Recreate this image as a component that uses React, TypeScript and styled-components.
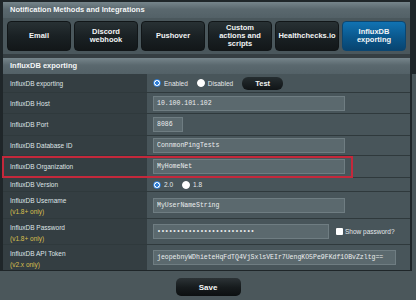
import React from "react";
import styled, { createGlobalStyle } from "styled-components";

const Global = createGlobalStyle`
  html, body {
    margin: 0;
    padding: 0;
    background: #4b575b;
    font-family: "Liberation Sans", Arial, sans-serif;
  }
`;

const tabs = [
  { id: "email", lines: ["Email"] },
  { id: "discord", lines: ["Discord", "webhook"] },
  { id: "pushover", lines: ["Pushover"] },
  { id: "custom", lines: ["Custom", "actions and", "scripts"] },
  { id: "hc", lines: ["Healthchecks.io"] },
  { id: "influx", lines: ["InfluxDB", "exporting"], active: true },
];

const App: React.FC = () => {
  return (
    <Page>
      <Global />
      <TopBlock>
        <SectionHeader>Notification Methods and Integrations</SectionHeader>
        <TabRow>
          {tabs.map((t) => (
            <Tab key={t.id} $active={!!t.active}>
              {t.lines.map((l) => (
                <span key={l}>{l}</span>
              ))}
            </Tab>
          ))}
        </TabRow>
        <SectionHeader>InfluxDB exporting</SectionHeader>
      </TopBlock>

      <Table>
        <Row $h={18}>
          <Label>InfluxDB exporting</Label>
          <Value>
            <Choice>
              <Radio $checked />
              Enabled
            </Choice>
            <Choice>
              <Radio />
              Disabled
            </Choice>
            <SmallButton>Test</SmallButton>
          </Value>
        </Row>
        <Row $h={21}>
          <Label>InfluxDB Host</Label>
          <Value>
            <TextInput $w={192} readOnly value="10.100.101.102" />
          </Value>
        </Row>
        <Row $h={22}>
          <Label>InfluxDB Port</Label>
          <Value>
            <TextInput $w={30} readOnly value="8086" />
          </Value>
        </Row>
        <Row $h={20}>
          <Label>InfluxDB Database ID</Label>
          <Value>
            <TextInput $w={192} readOnly value="ConnmonPingTests" />
          </Value>
        </Row>
        <Row $h={22}>
          <Highlight />
          <Label>InfluxDB Organization</Label>
          <Value>
            <TextInput $w={192} readOnly value="MyHomeNet" />
          </Value>
        </Row>
        <Row $h={14}>
          <Label>InfluxDB Version</Label>
          <Value>
            <Choice>
              <Radio $checked />
              2.0
            </Choice>
            <Choice>
              <Radio />
              1.8
            </Choice>
          </Value>
        </Row>
        <Row $h={27}>
          <Label $stacked>
            InfluxDB Username
            <Note>(v1.8+ only)</Note>
          </Label>
          <Value>
            <TextInput $w={192} readOnly value="MyUserNameString" />
          </Value>
        </Row>
        <Row $h={26}>
          <Label $stacked>
            InfluxDB Password
            <Note>(v1.8+ only)</Note>
          </Label>
          <Value>
            <TextInput $w={176} type="password" readOnly value="passwordpasswordpassword1" />
            <CheckLabel>
              <CheckBox />
              Show password?
            </CheckLabel>
          </Value>
        </Row>
        <Row $h={26}>
          <Label $stacked>
            InfluxDB API Token
            <Note>(v2.x only)</Note>
          </Label>
          <Value>
            <TextInput
              $w={243}
              readOnly
              value="jeopebnyWDhieteHqFdTQ4VjSxlsVEIr7UengKO5Pe9FKdf1OBvZzltg=="
            />
          </Value>
        </Row>
      </Table>

      <Footer>
        <SaveButton>Save</SaveButton>
      </Footer>
    </Page>
  );
};

const Page = styled.div`
  width: 416px;
  height: 300px;
  overflow: hidden;
  background: #4b575b;
`;

const TopBlock = styled.div`
  background: #1f2629;
  padding: 2px 6px 0 3px;
`;

const SectionHeader = styled.div`
  height: 16px;
  line-height: 16px;
  padding-left: 7px;
  background: linear-gradient(#76858b, #5a686e 45%, #536167);
  color: #f4f6f7;
  font-size: 7.5px;
  font-weight: bold;
`;

const TabRow = styled.div`
  display: flex;
  gap: 3px;
  padding: 3px 4px;
  background: #4a575c;
  border-bottom: 4px solid #353e42;
`;

const Tab = styled.div<{ $active: boolean }>`
  width: 64px;
  height: 30px;
  box-sizing: border-box;
  border-radius: 4px;
  border: 1px solid ${(p) => (p.$active ? "#0b4671" : "#111618")};
  background: ${(p) =>
    p.$active
      ? "linear-gradient(#1173b3, #0a578c 55%, #084470)"
      : "linear-gradient(#283134, #1a2124 50%, #131719)"};
  color: #f2f4f5;
  font-size: 7.5px;
  font-weight: bold;
  line-height: 8px;
  display: flex;
  flex-direction: column;
  align-items: center;
  justify-content: center;
  white-space: nowrap;
`;

const Table = styled.div`
  width: 412px;
  box-sizing: border-box;
  border-left: 3px solid #1f2629;
  border-right: 2px solid #1f2629;
  border-bottom: 1px solid #1f2629;
`;

const Row = styled.div<{ $h: number }>`
  position: relative;
  display: grid;
  grid-template-columns: 144px 1fr;
  height: ${(p) => p.$h}px;
  box-sizing: border-box;
  border-top: 1px solid #2f393c;
  &:first-child {
    border-top: none;
  }
`;

const Label = styled.div<{ $stacked?: boolean }>`
  background: #343e42;
  color: #dfe4e6;
  font-size: 6.5px;
  padding: ${(p) => (p.$stacked ? "3px 7px 0" : "0 7px")};
  display: flex;
  flex-direction: column;
  justify-content: ${(p) => (p.$stacked ? "flex-start" : "center")};
  line-height: 11px;
`;

const Note = styled.span`
  color: #d9bf4e;
`;

const Value = styled.div`
  background: #48555a;
  display: flex;
  align-items: center;
  padding-left: 6px;
  color: #e4e8ea;
  font-size: 6.5px;
`;

const TextInput = styled.input<{ $w: number }>`
  width: ${(p) => p.$w}px;
  height: 15px;
  box-sizing: border-box;
  border: 1px solid #6f7d82;
  background: #5b696e;
  color: #eceeef;
  font-family: "Liberation Mono", "Courier New", monospace;
  font-size: 6.5px;
  padding: 0 3px;
  outline: none;
  margin: 0;
`;

const Choice = styled.label`
  display: flex;
  align-items: center;
  gap: 3px;
  margin-right: 9px;
`;

const Radio = styled.span<{ $checked?: boolean }>`
  width: 8px;
  height: 8px;
  box-sizing: border-box;
  border-radius: 50%;
  border: 1.5px solid ${(p) => (p.$checked ? "#2f7fd8" : "#ffffff")};
  background: ${(p) =>
    p.$checked ? "radial-gradient(circle, #2f7fd8 0 38%, #ffffff 45%)" : "#ffffff"};
`;

const SmallButton = styled.div`
  width: 41px;
  height: 13px;
  border-radius: 6px;
  background: linear-gradient(#252d30, #101416);
  color: #f2f4f5;
  font-size: 7.5px;
  font-weight: bold;
  display: flex;
  align-items: center;
  justify-content: center;
`;

const CheckLabel = styled.label`
  display: flex;
  align-items: center;
  gap: 2px;
  margin-left: 7px;
`;

const CheckBox = styled.span`
  width: 7px;
  height: 7px;
  background: #ffffff;
  border-radius: 1px;
`;

const Highlight = styled.div`
  position: absolute;
  left: -1px;
  top: 0;
  width: 351px;
  height: 22px;
  box-sizing: border-box;
  border: 2px solid #c4283b;
  z-index: 2;
  pointer-events: none;
`;

const Footer = styled.div`
  display: flex;
  justify-content: center;
  padding-top: 7px;
`;

const SaveButton = styled.div`
  width: 65px;
  height: 18px;
  border-radius: 5px;
  background: linear-gradient(#2c3336, #171c1e 50%, #0c0f10);
  color: #f4f6f7;
  font-size: 8px;
  font-weight: bold;
  display: flex;
  align-items: center;
  justify-content: center;
`;

export default App;
